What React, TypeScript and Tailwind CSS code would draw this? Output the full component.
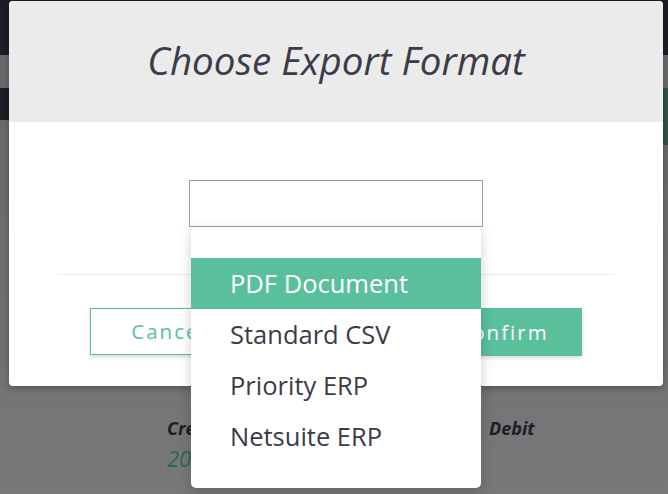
import React from "react";

const formats = ["PDF Document", "Standard CSV", "Priority ERP", "Netsuite ERP"];

const App: React.FC = () => {
  const [selected, setSelected] = React.useState(0);

  return (
    <div
      className="relative h-[494px] w-[668px] overflow-hidden bg-gradient-to-b from-[#68686c] to-[#78787a]"
      style={{ fontFamily: '"Open Sans", "Liberation Sans", sans-serif' }}
    >
      {/* page behind the overlay */}
      <div className="h-[55px] bg-[#1d1e25]" />
      <div className="h-[33px] bg-[#6c6c70]" />
      <div className="flex h-[32px]">
        <div className="flex-1 bg-[#1d1e25]" />
        <div className="w-[20px] bg-[#2b5847]" />
      </div>
      <div className="flex h-[25px] justify-end">
        <div className="w-[20px] bg-[#2b5847]" />
      </div>
      <div className="flex gap-[270px] pl-[167px] pt-[270px]">
        <div>
          <div className="text-[18px] font-bold italic text-[#1d1e25]">Credit</div>
          <div className="text-[22px] italic text-[#2a6a4f]">2022</div>
        </div>
        <div className="text-[18px] font-bold italic text-[#1d1e25]">Debit</div>
      </div>

      {/* modal */}
      <div className="absolute left-[9px] top-[1px] w-[654px] overflow-hidden rounded-[4px] bg-white shadow-[0_2px_8px_rgba(0,0,0,0.3)]">
        <div className="flex h-[121px] items-center justify-center bg-[#ebebeb] pb-[2px]">
          <h1 className="text-[38.5px] italic text-[#3b3c48]">Choose Export Format</h1>
        </div>
        <div className="h-[264px] px-[49px] pt-[58px]">
          <div className="ml-[131px] h-[47px] w-[294px] border border-[#9b9ba1]" />
          <div className="mt-[47px] h-px bg-[#ececec]" />
          <div className="mt-[33px] flex justify-between px-[32px]">
            <button className="h-[47px] w-[158px] border border-[#5bc19d] text-[20.5px] tracking-[2px] text-[#5bc19d] shadow-[0_2px_4px_rgba(0,0,0,0.15)]">
              Cancel
            </button>
            <button className="h-[48px] w-[158px] bg-[#5ac09c] text-[20.5px] tracking-[2px] text-white shadow-[0_2px_4px_rgba(0,0,0,0.15)]">
              Confirm
            </button>
          </div>
        </div>
      </div>

      {/* open dropdown */}
      <ul className="absolute left-[191px] top-[227px] w-[290px] rounded-b-[5px] bg-white pb-[26px] pt-[31px] shadow-[0_4px_14px_rgba(0,0,0,0.18)]">
        {formats.map((format, index) => (
          <li
            key={format}
            onClick={() => setSelected(index)}
            className={`flex h-[51px] items-center pl-[39px] text-[25.5px] ${
              index === selected ? "bg-[#5ac09c] text-white" : "text-[#3b3c48]"
            }`}
          >
            {format}
          </li>
        ))}
      </ul>
    </div>
  );
};

export default App;
